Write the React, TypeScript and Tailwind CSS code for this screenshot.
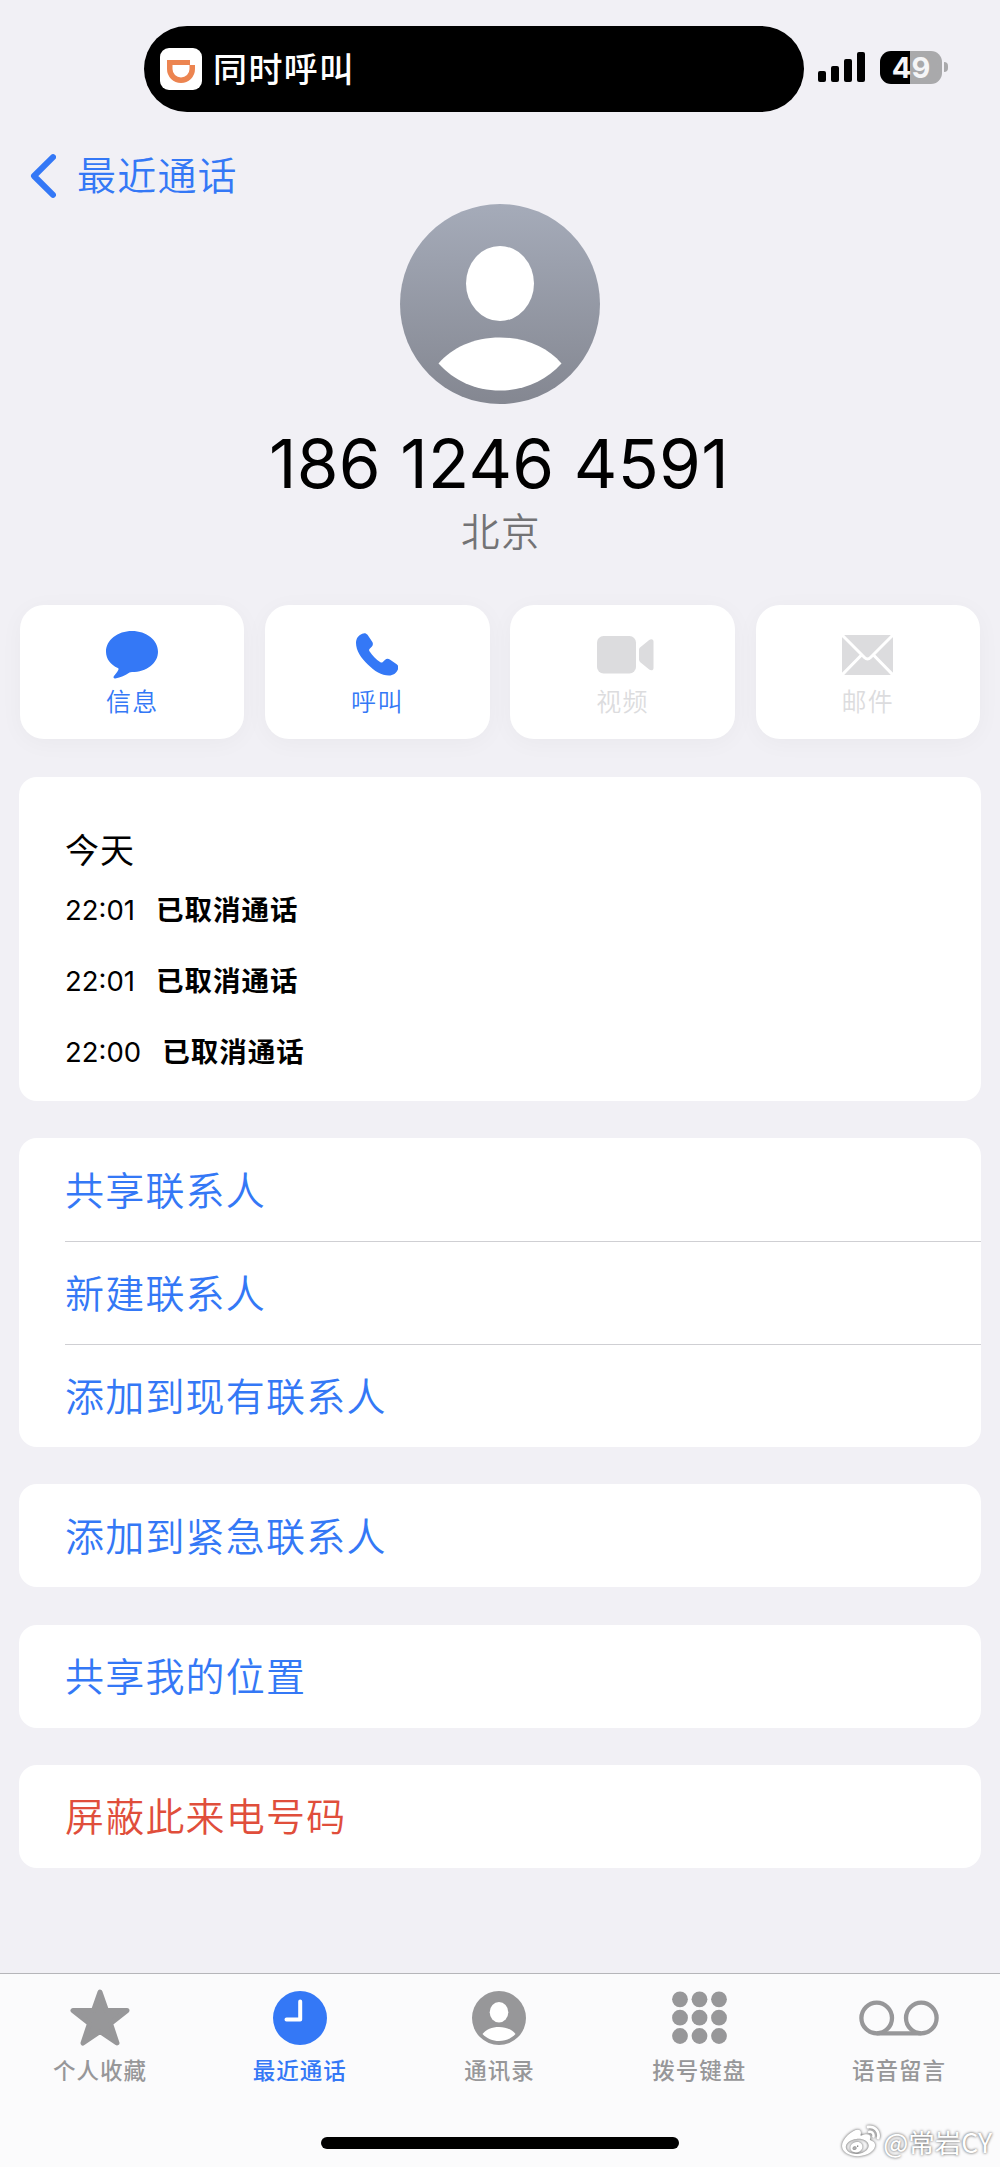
import type { ReactNode } from "react";
import { FaWeibo } from "react-icons/fa";

type Action = { label: string; icon: ReactNode; disabled?: boolean };
type Tab = { label: string; icon: ReactNode; active?: boolean };

const calls = [
 { id: 1, time: "22:01", status: "已取消通话" },
 { id: 2, time: "22:01", status: "已取消通话" },
 { id: 3, time: "22:00", status: "已取消通话" },
];

const optionGroups = [
 { rows: ["共享联系人", "新建联系人", "添加到现有联系人"] },
 { rows: ["添加到紧急联系人"] },
 { rows: ["共享我的位置"] },
 { rows: ["屏蔽此来电号码"], danger: true },
];

const actions: Action[] = [
 {
  label: "信息",
  icon: (
   <svg viewBox="0 0 52 48" className="w-[52px] h-12" fill="currentColor">
    <path d="M26 0C40.4 0 52 9.2 52 20.7S40.4 41 26 41c-1 0-1.7.2-2.5.6-4 2.6-9 5.2-14.2 5.8-1.7.2-2.3-1.3-1.3-2.5 1.9-2.2 3.5-4 4.4-6.2.3-.8.1-1.2-.6-1.6C4.5 33.6 0 27.8 0 20.7 0 9.2 11.6 0 26 0z" />
   </svg>
  ),
 },
 {
  label: "呼叫",
  icon: (
   <svg viewBox="0 0 42 43" className="w-[42px] h-[43px]" fill="currentColor">
    <path d="M6.2.7C8.3-.3 10.2 0 11.5 1.8l4.7 7c1.1 1.7.9 3.4-.5 4.9l-2 2.1c-.8.8-.8 1.5-.2 2.5 2.6 4.2 6.6 8.2 10.9 10.9.9.6 1.6.5 2.4-.2l2.1-2c1.5-1.4 3.2-1.6 4.9-.5l6.9 4.8c1.8 1.2 2.1 3.1 1.2 5.2-1.5 3.7-4.8 6-9 6-7.3 0-14.5-4.4-21.1-11C5.2 24.9 0 17.6 0 9.9 0 5.6 2.3 2.3 6.2.7z" />
   </svg>
  ),
 },
 {
  label: "视频",
  disabled: true,
  icon: (
   <svg viewBox="0 0 57 38" className="w-[57px] h-[38px] ml-[5px]" fill="currentColor">
    <rect width="39" height="37.5" rx="6.5" />
    <path d="M42 14.2c0-1.2.4-2.1 1.3-2.9l8.9-7.2c1.9-1.5 4.3-.9 4.3 1.5v26.3c0 2.4-2.4 3-4.3 1.5l-8.9-7.2c-.9-.8-1.3-1.7-1.3-2.9z" />
   </svg>
  ),
 },
 {
  label: "邮件",
  disabled: true,
  icon: (
   <svg viewBox="0 0 51 40" className="w-[51px] h-10" fill="none">
    <rect width="51" height="40" rx="3.5" fill="currentColor" />
    <path
     d="M-1-1 22.5 22.5c1.9 1.9 4.1 1.9 6 0L52-1M-1 41 19.5 20M52 41 31.5 20"
     stroke="white"
     strokeWidth="3"
    />
   </svg>
  ),
 },
];

const tabs: Tab[] = [
 {
  label: "个人收藏",
  icon: (
   <svg viewBox="0 0 60 58" className="w-[60px] h-[58px]" fill="currentColor" stroke="currentColor">
    <path
     d="M30 3 36.5 21.5H57L40.5 34.6 47 54 30 42.5 13 54 19.5 34.6 3 21.5H23.5z"
     strokeWidth="5"
     strokeLinejoin="round"
    />
   </svg>
  ),
 },
 {
  label: "最近通话",
  active: true,
  icon: (
   <svg viewBox="0 0 54 54" className="size-[54px]" fill="none">
    <circle cx="27" cy="27" r="27" fill="currentColor" />
    <path d="M27.2 10.5V28.5H13.5" stroke="white" strokeWidth="4" strokeLinecap="round" strokeLinejoin="round" />
   </svg>
  ),
 },
 {
  label: "通讯录",
  icon: (
   <svg viewBox="0 0 54 54" className="size-[54px]">
    <circle cx="27" cy="27" r="27" fill="currentColor" />
    <ellipse cx="27" cy="21.3" rx="9.3" ry="10.2" fill="white" />
    <path d="M10.5 43C14 38.5 20 36 27 36s13 2.5 16.5 7C39 47.7 33.5 50 27 50s-12-2.3-16.5-7z" fill="white" />
   </svg>
  ),
 },
 {
  label: "拨号键盘",
  icon: (
   <svg viewBox="0 0 55 54" className="w-[55px] h-[54px]" fill="currentColor">
    {[8.3, 26.7, 45].map((y) =>
     [8, 27.5, 47].map((x) => <circle key={`${x}-${y}`} cx={x} cy={y} r="7.9" />)
    )}
   </svg>
  ),
 },
 {
  label: "语音留言",
  icon: (
   <svg viewBox="0 0 80 36" className="w-20 h-9" fill="none" stroke="currentColor" strokeWidth="4.3">
    <circle cx="17.7" cy="18" r="15.3" />
    <circle cx="62.3" cy="18" r="15.3" />
    <path d="M17.7 33.3H62.3" />
   </svg>
  ),
 },
];

function StatusBar() {
 return (
  <div className="flex h-[112px] pt-[26px] pl-[144px]">
   <div className="flex items-center w-[660px] h-[86px] rounded-full bg-black pl-4 shrink-0">
    <div className="flex items-center justify-center size-[42px] rounded-[9px] bg-white">
     <svg viewBox="0 0 28 23" className="w-7 h-[23px] mt-1" fill="none">
      <path d="M0 0H23V5H28V9A14 14 0 0 1 0 9zM5.5 5V9A8.5 8.5 0 0 0 22.5 9V5z" fill="#ec8450" fillRule="evenodd" />
     </svg>
    </div>
    <span className="ml-[11px] pb-[3px] text-[34px] leading-none font-medium tracking-[1.4px] text-white">同时呼叫</span>
   </div>

   {/* Signal */}
   <div className="flex items-end gap-[5px] h-[30px] mt-[26px] ml-[14px]">
    <div className="w-2 h-[11px] rounded-[2px] bg-black" />
    <div className="w-2 h-4 rounded-[2px] bg-black" />
    <div className="w-2 h-[23px] rounded-[2px] bg-black" />
    <div className="w-2 h-[30px] rounded-[2px] bg-black" />
   </div>

   {/* Battery */}
   <div className="flex items-center h-[33px] mt-[24.5px] ml-[15px]">
    <div className="flex items-center justify-center w-[62px] h-[33px] rounded-[11px] bg-linear-to-r from-black from-49% to-[#a9a9ab] to-49%">
     <span className="font-['Inter'] font-bold text-[29px] leading-none text-[#f5f5f7]">49</span>
    </div>
    <div className="w-1 h-[10px] ml-0.5 rounded-r-full bg-[#a9a9ab]" />
   </div>
  </div>
 );
}

function ContactHeader() {
 return (
  <div className="flex flex-col items-center">
   <svg viewBox="0 0 200 200" className="size-[200px]">
    <defs>
     <linearGradient id="avatar" x1="0" y1="0" x2="0" y2="1">
      <stop offset="0" stopColor="#a5abb9" />
      <stop offset="1" stopColor="#848791" />
     </linearGradient>
    </defs>
    <circle cx="100" cy="100" r="100" fill="url(#avatar)" />
    <ellipse cx="100" cy="79.5" rx="34" ry="37.5" fill="white" />
    <path d="M38.5 159.5C52 143.5 74 133.5 100 133.5s48 10 61.5 26C146 176.5 125 186.5 100 186.5s-46-10-61.5-27z" fill="white" />
   </svg>
   <h1 className="mt-[18px] pr-0.5 font-['Inter'] text-[67.5px] leading-[84px] tracking-[0.3px] text-black">186 1246 4591</h1>
   <p className="mt-[3px] pb-[3px] pl-0.5 text-[38.5px] leading-10 font-[350] tracking-[1.5px] text-[#737375]">北京</p>
  </div>
 );
}

function App() {
 return (
  <div className="flex flex-col w-[1000px] h-[2167px] overflow-hidden bg-[#f1f0f5] font-['Noto_Sans_CJK_SC',sans-serif]">
   <StatusBar />

   {/* Back link */}
   <div className="flex items-end h-[92px] pl-[30px] pb-1.5 text-[#3478f6]">
    <svg viewBox="0 0 26 44" className="w-[26px] h-11" fill="none">
     <path d="M23 3.2 4 22 23 40.8" stroke="currentColor" strokeWidth="6" strokeLinecap="round" strokeLinejoin="round" />
    </svg>
    <span className="ml-[21px] mb-[5px] text-[39px] leading-none font-[350] tracking-[1.2px]">最近通话</span>
   </div>

   <ContactHeader />

   {/* Quick actions */}
   <div className="grid grid-cols-4 gap-[20.7px] px-5 mt-[53px] shrink-0">
    {actions.map((action) => (
     <button
      key={action.label}
      className={`flex flex-col items-center h-[134px] rounded-[24px] bg-white pt-6 shadow-[0_4px_24px_rgba(0,0,0,0.035)] ${action.disabled ? "text-[#dcdcde]" : "text-[#3478f6]"
       }`}
     >
      <span className="flex items-center justify-center h-[51px]">{action.icon}</span>
      <span className="mt-1.5 text-[25px] leading-7 font-[350] tracking-[1.3px]">{action.label}</span>
     </button>
    ))}
   </div>

   {/* Call history */}
   <section className="flex flex-col mx-[19px] mt-[38px] h-[324px] shrink-0 rounded-[18px] bg-white pl-[46px] pt-12 text-black">
    <h2 className="text-[34px] leading-[47px] tracking-[1px]">今天</h2>
    <div className="flex flex-col mt-px">
     {calls.map((call) => (
      <div key={call.id} className="flex items-center h-[71px]">
       <span className="mt-[5px] font-['Inter'] text-[27.5px] leading-none">{call.time}</span>
       <span className="ml-[21px] mt-px text-[27.5px] leading-none font-bold tracking-[1px]">{call.status}</span>
      </div>
     ))}
    </div>
   </section>

   {/* Options */}
   <div className="flex flex-col gap-[37.3px] mx-[19px] mt-[37px]">
    {optionGroups.map((group) => (
     <section key={group.rows[0]} className="flex flex-col rounded-[18px] bg-white pl-[46px]">
      {group.rows.map((row, i) => (
       <button
        key={row}
        className={`flex items-center h-[103px] pb-[3px] text-[39px] leading-none font-[350] tracking-[1.2px] ${group.danger ? "text-[#e04e3b]" : "text-[#3478f6]"
         } ${i > 0 ? "border-t border-[#cfcfd3]" : ""}`}
       >
        {row}
       </button>
      ))}
     </section>
    ))}
   </div>

   {/* Bottom navigation */}
   <nav className="relative flex flex-col items-center mt-auto h-[194px] shrink-0 border-t border-[#b5b5b9] bg-[#fbfbfc]">
    <div className="grid grid-cols-5 w-full pr-px">
     {tabs.map((tab) => (
      <div
       key={tab.label}
       className={`flex flex-col items-center pt-[13px] ${tab.active ? "text-[#3478f6]" : "text-[#979799]"}`}
      >
       <span className="flex items-center justify-center h-[61px]">{tab.icon}</span>
       <span className="mt-[7px] text-[22.5px] leading-7 font-medium tracking-[1px]">{tab.label}</span>
      </div>
     ))}
    </div>
    <div className="w-[358px] h-3 rounded-full bg-black mt-[54px]" />

    <div className="absolute right-2 bottom-[6px] flex items-center gap-[3px] text-white">
     <FaWeibo className="size-[38px] drop-shadow-[0_0_1.5px_rgba(0,0,0,0.7)]" />
     <span className="text-[26.5px] leading-8 [text-shadow:0_0_3px_rgba(0,0,0,0.75)]">@常岩CY</span>
    </div>
   </nav>
  </div>
 );
}

export default App;
